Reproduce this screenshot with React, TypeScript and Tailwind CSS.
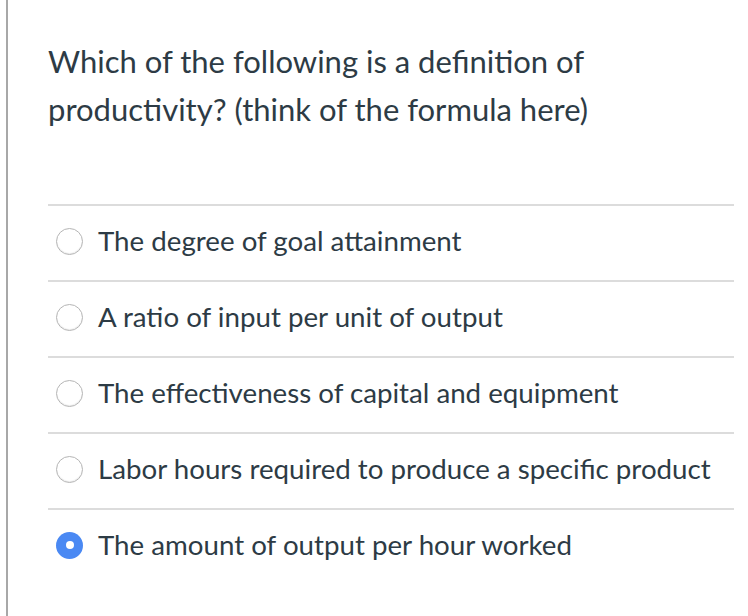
import { useState } from 'react';

const ANSWERS = [
  'The degree of goal attainment',
  'A ratio of input per unit of output',
  'The effectiveness of capital and equipment',
  'Labor hours required to produce a specific product',
  'The amount of output per hour worked',
];

function Radio({ checked }: { checked: boolean }) {
  if (checked) {
    return (
      <span className="flex h-[27px] w-[27px] flex-shrink-0 items-center justify-center rounded-full bg-[#4a89f3]">
        <span className="h-[8px] w-[8px] rounded-full bg-white" />
      </span>
    );
  }
  return (
    <span className="h-[27px] w-[27px] flex-shrink-0 rounded-full border border-[#b5b5b5] bg-white shadow-[inset_0_-1px_1px_rgba(0,0,0,0.08)]" />
  );
}

export default function App() {
  const [selected, setSelected] = useState(4);

  return (
    <div className="min-h-[616px] bg-white" style={{ fontFamily: 'Lato, "Noto Sans", sans-serif' }}>
      <div className="ml-[6px] min-h-[616px] border-l-2 border-[#a8a8a8] pl-[40px] pr-[14px] pt-[37px] text-[#2d3b45]">
        <p className="text-[31px] leading-[48px]">
          Which of the following is a definition of
          <br />
          productivity? (think of the formula here)
        </p>
        <div className="mt-[71px]">
          {ANSWERS.map((answer, i) => (
            <label
              key={answer}
              onClick={() => setSelected(i)}
              className="flex h-[76px] cursor-pointer items-center gap-[15px] border-t-2 border-[#dcdcdc] pl-[8px] pb-[4px]"
            >
              <Radio checked={selected === i} />
              <span className="text-[27.7px]">{answer}</span>
            </label>
          ))}
        </div>
      </div>
    </div>
  );
}
